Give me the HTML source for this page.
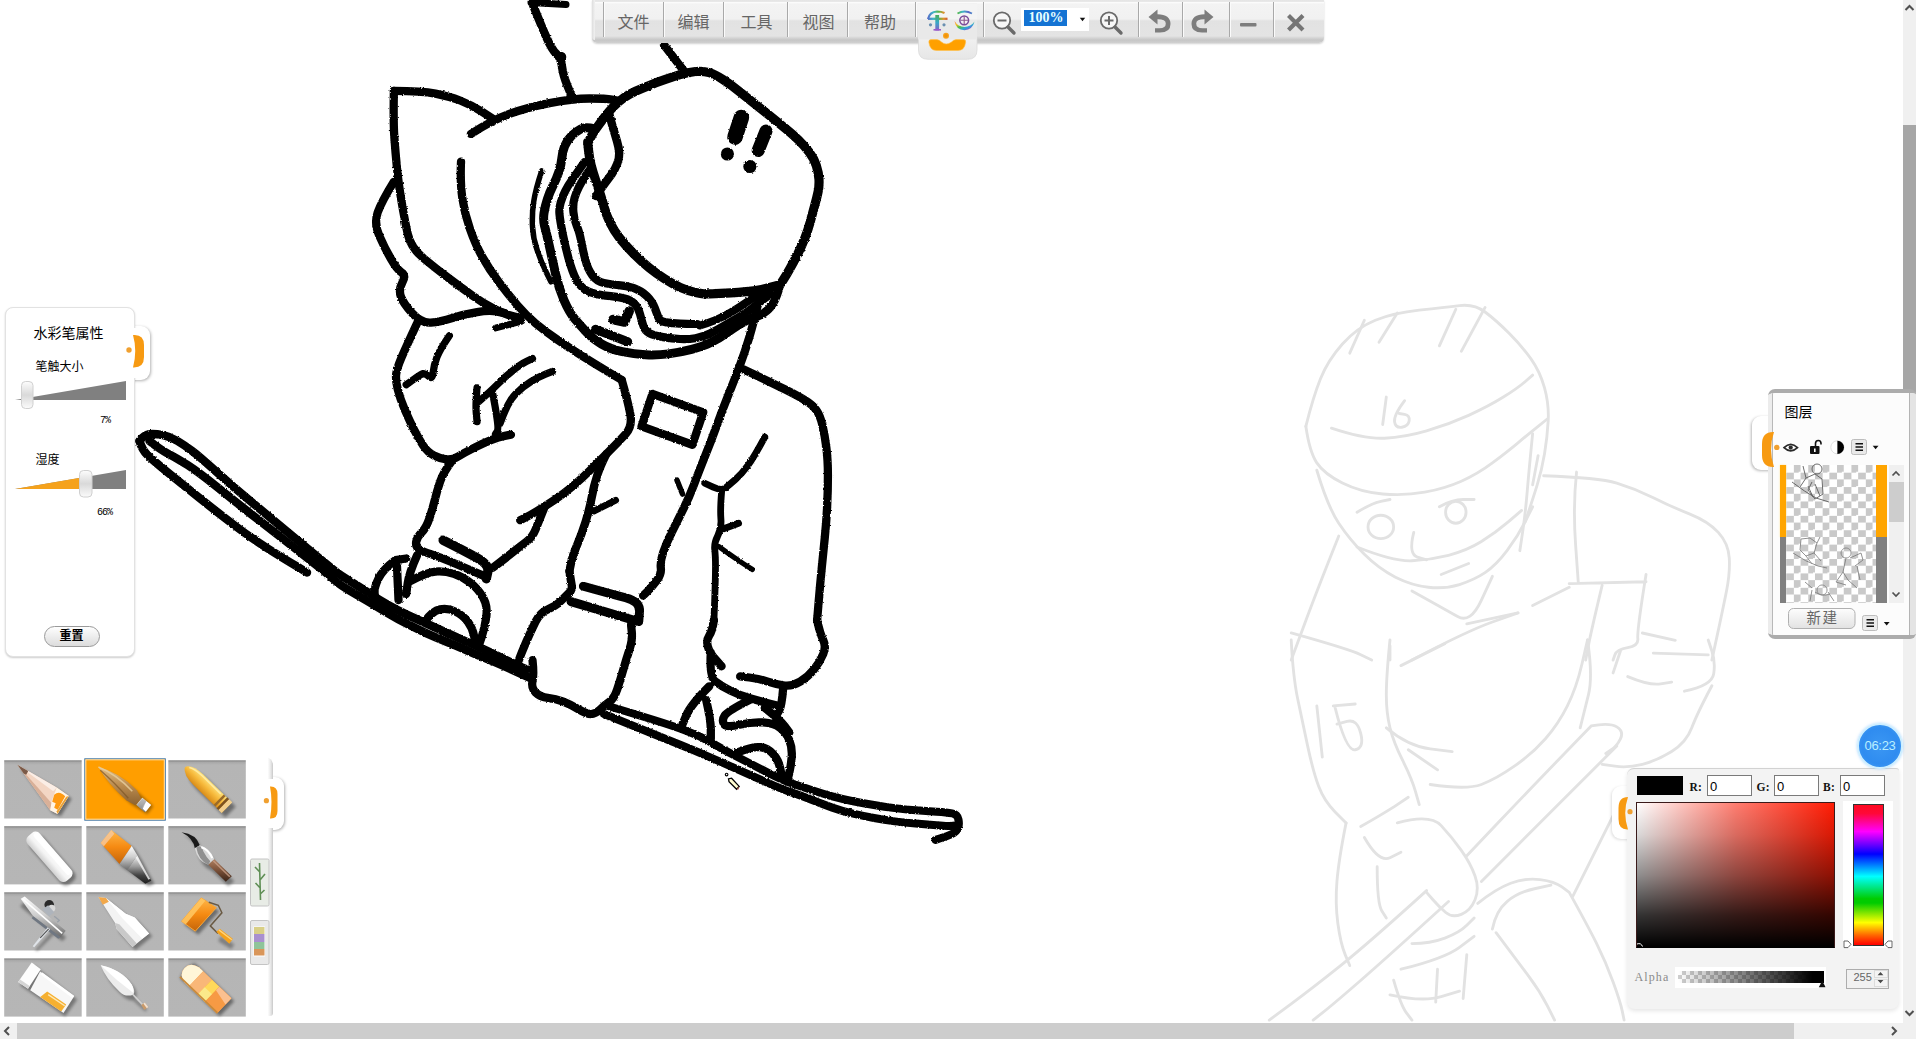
<!DOCTYPE html>
<html lang="zh"><head><meta charset="utf-8"><title>画板</title>
<style>
*{box-sizing:border-box;margin:0;padding:0}
html,body{width:1916px;height:1039px;overflow:hidden;background:#fff;font-family:"Liberation Sans","Noto Sans CJK SC",sans-serif}
.abs{position:absolute}
#canvas{position:absolute;left:0;top:0;width:1916px;height:1039px}
/* scrollbars */
#vs{left:1903px;top:0;width:13px;height:1023px;background:#f0f0f0}
#vs .th{position:absolute;left:0;top:125px;width:13px;height:300px;background:#a6a6a6}
#hs{left:0;top:1023px;width:1916px;height:16px;background:#f0f0f0}
#hs .th{position:absolute;left:17px;top:0;width:1777px;height:16px;background:#cdcdcd}
/* toolbar */
#tb{left:592px;top:0;width:732px;height:43px;border-radius:0 0 5px 5px;background:linear-gradient(#e4e4e4 0,#e9e9e9 2px,#fbfbfb 2.5px,#f3f3f3 4px,#f1f1f1 19px,#e2e2e2 21px,#e4e4e4 36px,#d4d4d4 38px,#c6c6c6 40px,#d0d0d0 43px);box-shadow:0 1px 2px rgba(0,0,0,.18);border-left:2px solid #e9e9e9;border-right:2px solid #dcdcdc}
.sep{position:absolute;top:2px;width:2px;height:35px;border-left:1px solid #a9a9a9;border-right:1px solid #fbfbfb}
.mi{position:absolute;top:13px;font-size:16px;line-height:20px;color:#666;white-space:nowrap}
/* panels */
.pn{background:#fff;border:1px solid #d9d9d9;border-radius:8px;box-shadow:0 1px 3px rgba(0,0,0,.25)}
.t12{font-size:12px;line-height:14px;color:#000;white-space:nowrap}
</style></head><body>
<svg id="canvas" viewBox="0 0 1916 1039">
<g id="ghost" fill="none" stroke="#e2e2e2" stroke-width="7.8" stroke-linecap="round" stroke-linejoin="round">
<g transform="translate(1240,280) scale(0.3658)">
<path d="M180.0,400.0 Q200.0,320.0 220.0,270.0 Q240.0,220.0 280.0,175.0 Q320.0,130.0 370.0,110.0 Q420.0,90.0 490.0,82.5 Q560.0,75.0 600.0,70.0 Q640.0,65.0 670.0,87.5 Q700.0,110.0 735.0,145.0 Q770.0,180.0 795.0,215.0 Q820.0,250.0 832.5,295.0 Q845.0,340.0 842.5,385.0 Q840.0,430.0 832.5,475.0 Q825.0,520.0 812.5,560.0 Q800.0,600.0 790.0,630.0 L780.0,660.0"/>
<path d="M180.0,400.0 Q190.0,470.0 210.0,500.0 Q230.0,530.0 280.0,555.0 Q330.0,580.0 390.0,585.0 Q450.0,590.0 505.0,580.0 Q560.0,570.0 605.0,550.0 Q650.0,530.0 690.0,500.0 Q730.0,470.0 760.0,445.0 Q790.0,420.0 815.0,400.0 L840.0,380.0"/>
<path d="M250.0,405.0 Q340.0,435.0 395.0,432.5 Q450.0,430.0 510.0,412.5 Q570.0,395.0 625.0,370.0 Q680.0,345.0 720.0,320.0 Q760.0,295.0 780.0,277.5 L800.0,260.0"/>
<path d="M430.0,90.0 L380.0,170.0 M590.0,80.0 L545.0,180.0 M670.0,75.0 L605.0,195.0 M340.0,110.0 L300.0,200.0"/>
<path d="M400.0,320.0 L390.0,395.0 M450.0,330.0 Q420.0,370.0 422.5,387.5 Q425.0,405.0 442.5,402.5 Q460.0,400.0 462.5,385.0 Q465.0,370.0 450.0,367.5 L435.0,365.0"/>
<path d="M210.0,520.0 Q240.0,620.0 270.0,665.0 Q300.0,710.0 340.0,750.0 Q380.0,790.0 425.0,812.5 Q470.0,835.0 515.0,840.0 Q560.0,845.0 600.0,832.5 Q640.0,820.0 670.0,800.0 Q700.0,780.0 730.0,740.0 Q760.0,700.0 780.0,660.0 L800.0,620.0"/>
<ellipse cx="385" cy="675" rx="35" ry="32"/><ellipse cx="590" cy="635" rx="28" ry="30"/>
<path d="M320.0,635.0 Q360.0,610.0 385.0,605.0 L410.0,600.0 M545.0,620.0 Q580.0,600.0 610.0,600.0 L640.0,600.0"/>
<path d="M475.0,690.0 Q460.0,750.0 485.0,757.5 L510.0,765.0 M550.0,805.0 L625.0,775.0"/>
<path d="M320.0,730.0 Q420.0,770.0 470.0,767.5 Q520.0,765.0 570.0,752.5 Q620.0,740.0 660.0,715.0 Q700.0,690.0 735.0,660.0 L770.0,630.0"/>
<path d="M470.0,850.0 Q560.0,900.0 595.0,920.0 Q630.0,940.0 660.0,875.0 L690.0,810.0 M620.0,940.0 L760.0,910.0"/>
<path d="M270.0,700.0 Q210.0,850.0 175.0,944.5 L140.0,1039.0 M140.0,965.0 Q300.0,1010.0 330.0,1024.5 L360.0,1039.0 M410.0,1000.0 L410.0,1039.0 M470.0,1039.0 Q620.0,960.0 690.0,935.0 L760.0,910.0"/>
<path d="M830.0,535.0 Q980.0,540.0 1030.0,555.0 Q1080.0,570.0 1130.0,595.0 Q1180.0,620.0 1230.0,640.0 Q1280.0,660.0 1307.5,690.0 Q1335.0,720.0 1337.5,760.0 Q1340.0,800.0 1330.0,850.0 Q1320.0,900.0 1305.0,969.5 L1290.0,1039.0"/>
<path d="M920.0,525.0 Q910.0,620.0 917.5,725.0 L925.0,830.0 M900.0,830.0 L1110.0,825.0 M800.0,890.0 L900.0,840.0 M990.0,835.0 Q960.0,960.0 952.5,999.5 L945.0,1039.0 M1110.0,805.0 Q1085.0,960.0 1087.5,980.0 Q1090.0,1000.0 1060.0,1005.0 Q1030.0,1010.0 1025.0,1024.5 L1020.0,1039.0 M1100.0,965.0 L1190.0,985.0 M1130.0,1020.0 L1280.0,1025.0"/>
<path d="M800.0,420.0 Q790.0,520.0 785.0,580.0 Q780.0,640.0 772.5,690.0 L765.0,740.0 M815.0,480.0 L800.0,560.0"/>
</g>
<g transform="translate(1240,640) scale(0.3658)">
<path d="M140.0,0.0 Q145.0,100.0 157.5,160.0 Q170.0,220.0 185.0,290.0 Q200.0,360.0 215.0,400.0 Q230.0,440.0 260.0,470.0 L290.0,500.0 M410.0,0.0 Q400.0,100.0 400.0,150.0 Q400.0,200.0 410.0,240.0 Q420.0,280.0 445.0,330.0 Q470.0,380.0 480.0,415.0 L490.0,450.0"/>
<path d="M210.0,180.0 L225.0,320.0 M260.0,185.0 Q290.0,305.0 315.0,300.0 Q340.0,295.0 330.0,255.0 Q320.0,215.0 292.5,222.5 L265.0,230.0 M255.0,180.0 L315.0,175.0"/>
<path d="M290.0,500.0 Q270.0,600.0 265.0,660.0 Q260.0,720.0 267.5,775.0 Q275.0,830.0 287.5,860.0 L300.0,890.0 M330.0,510.0 Q400.0,470.0 430.0,450.0 L460.0,430.0 M340.0,540.0 Q380.0,610.0 410.0,595.0 L440.0,580.0 M375.0,620.0 Q375.0,720.0 387.5,740.0 L400.0,760.0"/>
<path d="M430.0,500.0 Q520.0,475.0 550.0,507.5 Q580.0,540.0 605.0,575.0 Q630.0,610.0 642.5,645.0 Q655.0,680.0 642.5,710.0 Q630.0,740.0 605.0,750.0 Q580.0,760.0 562.5,745.0 Q545.0,730.0 527.5,710.0 L510.0,690.0"/>
<path d="M960.0,235.0 Q1010.0,225.0 1030.0,237.5 Q1050.0,250.0 1040.0,270.0 Q1030.0,290.0 1015.0,300.0 L1000.0,310.0 M960.0,235.0 Q800.0,400.0 710.0,495.0 L620.0,590.0 M1030.0,290.0 Q870.0,450.0 765.0,555.0 L660.0,660.0 M510.0,685.0 Q350.0,830.0 275.0,890.0 Q200.0,950.0 140.0,994.5 L80.0,1039.0 M570.0,715.0 Q400.0,870.0 325.0,935.0 Q250.0,1000.0 225.0,1019.5 L200.0,1039.0"/>
<path d="M440.0,70.0 L560.0,10.0 M400.0,240.0 Q460.0,290.0 520.0,297.5 L580.0,305.0 M460.0,300.0 L540.0,355.0 M520.0,395.0 Q620.0,410.0 660.0,395.0 Q700.0,380.0 750.0,345.0 Q800.0,310.0 835.0,270.0 Q870.0,230.0 895.0,180.0 Q920.0,130.0 935.0,65.0 L950.0,0.0"/>
<path d="M950.0,0.0 Q965.0,100.0 952.5,150.0 Q940.0,200.0 935.0,220.0 L930.0,240.0 M1040.0,30.0 L1020.0,90.0 M1060.0,100.0 Q1120.0,125.0 1150.0,120.0 L1180.0,115.0 M1215.0,140.0 Q1290.0,125.0 1295.0,92.5 Q1300.0,60.0 1290.0,30.0 L1280.0,0.0 M1290.0,125.0 Q1250.0,200.0 1235.0,240.0 Q1220.0,280.0 1180.0,305.0 Q1140.0,330.0 1100.0,340.0 Q1060.0,350.0 1025.0,345.0 L990.0,340.0"/>
<path d="M650.0,720.0 Q700.0,680.0 740.0,665.0 Q780.0,650.0 820.0,655.0 Q860.0,660.0 880.0,675.0 L900.0,690.0 M690.0,790.0 Q700.0,740.0 730.0,715.0 Q760.0,690.0 805.0,680.0 L850.0,670.0 M900.0,690.0 Q950.0,780.0 975.0,830.0 Q1000.0,880.0 1020.0,935.0 Q1040.0,990.0 1045.0,1014.5 L1050.0,1039.0 M700.0,800.0 Q760.0,880.0 790.0,920.0 Q820.0,960.0 840.0,999.5 L860.0,1039.0 M910.0,700.0 Q960.0,600.0 990.0,540.0 L1020.0,480.0"/>
<path d="M470.0,830.0 Q520.0,830.0 560.0,815.0 Q600.0,800.0 620.0,780.0 L640.0,760.0 M440.0,900.0 Q560.0,870.0 600.0,840.0 L640.0,810.0 M420.0,930.0 Q440.0,1000.0 455.0,1019.5 L470.0,1039.0 M540.0,900.0 L535.0,990.0 M620.0,860.0 L610.0,980.0 M410.0,970.0 Q500.0,990.0 550.0,975.0 L600.0,960.0"/>
</g>
<!-- cursor -->
<g stroke="none"><circle cx="726.6" cy="774.6" r="1.3" fill="#fff" stroke="#000" stroke-width="1.1"/>
<path d="M728.5,778.8 L731.6,778.2 L739.2,786.4 L736.6,789.2 L729,781.6 Z" fill="#fffbd0" stroke="#000" stroke-width="1.3" stroke-linejoin="miter"/><path d="M736.6,789.2 L739.2,786.4 L738.6,789.6 Z" fill="#b05a50"/></g>
</g>
<defs><filter id="rough" filterUnits="userSpaceOnUse" x="120" y="-10" width="860" height="870"><feTurbulence type="fractalNoise" baseFrequency="0.6" numOctaves="2" seed="4" result="n"/><feDisplacementMap in="SourceGraphic" in2="n" scale="2.4" xChannelSelector="R" yChannelSelector="G" result="d"/><feGaussianBlur in="d" stdDeviation="0.35"/></filter></defs>
<g id="ink" filter="url(#rough)" fill="none" stroke="#000" stroke-width="8.4" stroke-linecap="round" stroke-linejoin="round">
<!-- real-coordinate strokes -->
<path d="M531.0,2.5 L566.0,4.5" stroke-width="7"/>
<path d="M533.0,5.0 Q541.0,25.0 546.5,37.5 Q552.0,50.0 556.5,54.0 Q561.0,58.0 562.0,66.5 Q563.0,75.0 567.5,86.0 L572.0,97.0"/>
<circle cx="561" cy="57" r="3.2" fill="#000" stroke-width="4.2"/>
<path d="M664.0,45.0 L684.0,71.0"/>
<path d="M741.4,117.5 L735.0,137.0" stroke-width="15.5"/>
<circle cx="727.4" cy="154" r="6.6" fill="#000" stroke="none"/>
<path d="M766.0,131.0 L758.2,150.5" stroke-width="13"/>
<circle cx="749.9" cy="166.5" r="6.6" fill="#000" stroke="none"/>
<!-- helmet & straps (real coords) -->
<path d="M587.7,143.2 Q592.3,133.9 596.1,128.6 Q600.0,123.2 604.6,117.0 Q609.3,110.8 613.9,106.2 Q618.5,101.6 623.9,97.8 Q629.3,93.9 635.5,91.2 Q641.6,88.5 649.3,85.4 Q657.0,82.3 664.7,79.7 Q672.4,77.0 680.1,74.7 Q687.8,72.3 695.5,71.5 Q703.2,70.8 709.3,72.7 Q715.4,74.6 723.1,79.7 Q730.8,84.7 738.5,90.8 Q746.2,97.0 753.9,103.2 Q761.6,109.3 769.3,115.4 Q777.0,121.6 784.7,127.8 Q792.4,133.9 798.5,140.1 Q804.7,146.3 809.4,152.4 Q814.0,158.6 816.3,165.5 Q818.6,172.4 819.0,179.4 Q819.3,186.3 818.1,191.7 Q817.0,197.0 814.7,205.4 Q812.4,213.9 810.1,222.4 Q807.8,230.8 804.7,238.5 Q801.6,246.2 797.8,253.9 Q793.9,261.6 790.0,268.6 Q786.2,275.5 783.1,280.1 Q780.0,284.7 780.0,284.7 Q780.0,284.7 774.6,286.2 Q769.3,287.8 761.6,289.4 Q753.9,290.9 746.2,291.6 Q738.5,292.4 730.8,292.8 Q723.1,293.2 715.4,293.6 Q707.7,294.0 705.5,293.9 Q703.2,293.9 695.5,292.4 Q687.8,290.9 680.1,287.4 Q672.4,283.9 664.7,278.9 Q657.0,273.9 649.3,267.8 Q641.6,261.6 633.9,253.9 Q626.2,246.2 620.0,238.5 Q613.9,230.8 610.2,223.1 Q606.5,215.4 604.5,208.2 Q602.5,201.0 600.2,194.0 Q598.0,187.0 595.5,179.8 Q593.0,172.5 591.1,165.2 Q589.3,158.0 588.5,150.0 L587.7,142.0" stroke-width="9.2"/>
<path d="M780.0,284.7 Q777.0,297.0 773.1,303.2 Q769.3,309.4 764.6,312.4 Q760.0,315.5 756.2,317.1 L752.4,318.6" stroke-width="8.4"/>
<path d="M609.3,113.9 Q610.9,121.0 613.0,127.8 Q615.0,134.6 617.0,141.3 Q619.0,148.0 619.2,153.0 Q619.5,158.0 617.2,163.8 Q615.0,169.5 611.8,174.0 Q608.5,178.5 605.0,183.2 Q601.6,187.8 598.8,191.9 L596.0,196.0" stroke-width="8.4"/>
<path d="M589.0,170.5 Q582.0,181.0 579.1,186.7 Q576.2,192.4 574.5,198.2 Q572.7,204.0 573.4,212.0 Q574.0,220.0 576.8,226.0 Q579.5,232.0 581.2,241.4 Q583.0,250.8 585.4,260.1 Q587.7,269.3 592.4,275.5 Q597.0,281.6 603.9,283.1 Q610.8,284.7 618.5,285.1 Q626.2,285.5 633.9,288.2 Q641.6,290.9 647.0,296.2 Q652.4,301.6 654.7,307.8 Q657.0,314.0 658.5,317.8 Q660.0,321.6 666.2,322.4 Q672.4,323.2 680.1,323.6 Q687.8,324.0 692.4,324.0 L697.0,324.0" stroke-width="8.2"/>
<path d="M700.0,325.5 Q707.7,323.2 715.4,320.1 Q723.1,317.0 730.8,312.4 Q738.5,307.8 746.2,302.4 Q753.9,297.0 760.8,293.9 L767.8,290.9" stroke-width="8"/>
<path d="M584.3,162.4 Q576.2,173.9 572.2,179.7 Q568.1,185.5 565.2,191.2 Q562.3,197.0 560.6,202.8 Q558.9,208.6 559.5,214.3 Q560.0,220.0 562.4,232.4 Q564.8,244.8 568.6,258.6 Q572.5,272.5 576.2,279.4 Q580.0,286.2 584.6,289.3 Q589.2,292.4 596.1,293.9 Q603.0,295.5 610.8,296.2 Q618.5,297.0 624.6,298.5 Q630.8,300.0 634.6,303.9 Q638.5,307.8 640.0,313.9 Q641.6,320.0 643.2,325.4 Q644.7,330.9 649.4,333.2 Q654.0,335.5 663.2,337.1 Q672.4,338.6 680.1,339.0 Q687.8,339.4 695.4,338.2 Q703.0,337.0 710.0,333.5 Q717.0,330.0 724.5,325.5 Q732.0,321.0 739.0,317.0 Q746.0,313.0 752.2,308.1 Q758.5,303.2 764.6,298.6 L770.8,294.0" stroke-width="8.2"/>
<path d="M594.7,128.9 Q585.4,126.6 580.8,128.9 Q576.2,131.2 571.6,135.8 Q567.0,140.4 564.6,146.2 Q562.3,152.0 561.8,158.3 Q561.2,164.7 558.9,171.6 Q556.6,178.5 553.1,185.4 Q549.6,192.4 547.3,199.4 Q545.0,206.3 544.0,213.2 Q543.0,220.0 544.6,226.2 Q546.3,232.5 549.4,246.3 Q552.5,260.2 555.6,274.0 Q558.7,287.9 564.0,300.2 Q569.4,312.6 574.7,318.8 Q580.0,325.0 586.1,331.8 Q592.3,338.6 601.5,344.0 Q610.8,349.4 622.3,351.7 Q633.9,354.0 645.5,354.8 Q657.0,355.5 668.5,353.9 Q680.0,352.4 691.6,349.4 Q703.2,346.3 710.9,342.5 Q718.6,338.6 726.3,333.2 Q734.0,327.8 739.5,324.4 Q745.0,321.0 750.0,318.8 L755.0,316.5" stroke-width="9"/>
<path d="M613,319.5 L624.5,322 L629.3,311" stroke-width="9.5"/>
<path d="M595.4,329.3 L627.7,341.7" stroke-width="9"/>
<!-- board lines -->
<path d="M139.5,441.0 Q144.0,434.5 150.0,434.1 Q156.0,433.8 163.0,435.1 Q170.0,436.5 177.5,441.0 Q185.0,445.5 192.0,450.8 Q199.0,456.0 216.5,471.8 Q234.0,487.5 251.5,502.0 Q269.0,516.5 286.0,530.8 Q303.0,545.0 316.5,556.0 Q330.0,567.0 335.0,571.0 Q340.0,575.0 349.6,580.8 Q359.2,586.6 368.9,593.0 Q378.5,599.5 388.1,605.0 Q397.7,610.5 407.4,614.9 Q417.0,619.3 426.6,623.6 Q436.2,628.0 445.9,632.4 Q455.5,636.7 465.1,641.0 Q474.7,645.3 484.4,649.6 Q494.0,654.0 503.6,658.8 Q513.2,663.6 520.0,666.5 L526.7,669.4"/>
<path d="M149.5,441.0 Q160.8,450.0 168.5,453.9 Q176.2,457.7 187.6,465.1 Q199.0,472.5 216.5,486.6 Q234.0,500.8 251.5,514.4 Q269.0,528.0 286.0,541.2 Q303.0,554.5 316.5,565.2 Q330.0,576.0 335.0,580.5 Q340.0,585.0 349.6,590.6 Q359.2,596.2 368.9,602.0 Q378.5,607.8 388.1,613.5 Q397.7,619.3 407.4,624.1 Q417.0,629.0 426.6,633.3 Q436.2,637.6 445.9,641.5 Q455.5,645.3 465.1,649.6 Q474.7,654.0 484.4,657.9 Q494.0,661.7 503.6,666.0 Q513.2,670.4 521.6,674.2 L530.0,678.0"/>
<path d="M139.5,441.0 Q142.0,449.5 147.2,454.8 Q152.5,460.0 167.2,472.0 Q182.0,484.0 199.5,498.0 Q217.0,512.0 234.0,525.0 Q251.0,538.0 268.5,549.0 Q286.0,560.0 296.5,566.2 L307.0,572.5"/>
<path d="M608.0,706.0 Q634.7,714.0 654.0,720.0 Q673.2,726.0 686.6,730.9 Q700.0,735.8 710.8,742.3 Q721.6,748.8 737.0,756.8 Q752.4,764.8 767.8,772.6 Q783.2,780.5 792.1,783.5 Q801.0,786.5 811.5,790.0 Q822.0,793.5 832.3,796.4 Q842.6,799.2 853.0,801.2 Q863.5,803.2 874.0,805.0 Q884.4,806.8 894.8,808.1 Q905.3,809.4 915.6,810.2 Q926.0,811.0 936.5,811.8 Q947.0,812.5 952.2,813.4 Q957.5,814.3 958.5,819.5 Q959.5,824.7 958.0,828.4 Q956.4,832.0 951.7,834.1 Q947.0,836.2 941.2,838.0 L935.5,839.9" stroke-width="8"/>
<path d="M604.0,714.0 Q634.7,726.5 654.0,734.2 Q673.2,742.0 682.0,745.5 Q690.8,749.0 706.2,755.6 Q721.6,762.2 737.0,769.1 Q752.4,776.0 767.8,782.9 Q783.2,789.8 792.1,792.6 Q801.0,795.5 811.5,799.8 Q822.0,804.0 832.3,807.6 Q842.6,811.3 853.0,813.6 Q863.5,816.0 874.0,818.0 Q884.4,820.0 894.8,821.4 Q905.3,822.8 915.6,823.6 Q926.0,824.4 936.5,825.3 Q947.0,826.3 951.0,825.9 L955.0,825.5" stroke-width="8"/>

<!-- G1 origin (360,60) -->
<g transform="translate(360,60) scale(0.308)" stroke-width="26.9">
<path d="M110.0,100.0 Q200.0,100.0 245.0,109.0 Q290.0,118.0 325.0,131.5 Q360.0,145.0 395.0,167.5 L430.0,190.0"/>
<path d="M360.0,240.0 Q430.0,195.0 485.0,175.0 Q540.0,155.0 615.0,140.0 Q690.0,125.0 745.0,125.0 Q800.0,125.0 817.5,128.5 L835.0,132.0"/>
<path d="M110.0,100.0 Q108.0,200.0 111.5,250.0 Q115.0,300.0 120.0,350.0 Q125.0,400.0 135.0,460.0 Q145.0,520.0 155.0,565.0 Q165.0,610.0 207.5,645.0 Q250.0,680.0 290.0,710.0 Q330.0,740.0 365.0,765.0 Q400.0,790.0 435.0,807.5 Q470.0,825.0 495.0,831.5 L520.0,838.0"/>
<path d="M440.0,870.0 L525.0,848.0" stroke-width="22.1"/>
<path d="M110.0,395.0 Q70.0,460.0 57.5,495.0 Q45.0,530.0 62.5,570.0 Q80.0,610.0 100.0,645.0 Q120.0,680.0 135.0,690.0 Q150.0,700.0 137.5,722.5 Q125.0,745.0 132.5,767.5 Q140.0,790.0 170.0,822.5 Q200.0,855.0 230.0,852.5 Q260.0,850.0 300.0,837.5 Q340.0,825.0 380.0,818.5 Q420.0,812.0 445.0,817.0 L470.0,822.0"/>
<path d="M328.0,330.0 Q325.0,400.0 332.5,450.0 Q340.0,500.0 357.5,550.0 Q375.0,600.0 397.5,640.0 Q420.0,680.0 450.0,720.0 Q480.0,760.0 510.0,795.0 Q540.0,830.0 570.0,855.0 Q600.0,880.0 640.0,907.5 Q680.0,935.0 720.0,960.0 Q760.0,985.0 805.0,1012.0 L850.0,1039.0"/>
<path d="M590.0,360.0 Q570.0,420.0 564.0,460.0 Q558.0,500.0 560.0,540.0 Q562.0,580.0 576.0,620.0 Q590.0,660.0 605.0,690.0 L620.0,720.0" stroke-width="17.9"/>
</g>

<!-- G2 origin (560,40) -->
<g transform="translate(560,40) scale(0.308)" stroke-width="26.9">
</g>

<!-- G3 origin (360,300) -->
<g transform="translate(360,300) scale(0.308)" stroke-width="26.9">
<path d="M185.0,76.0 Q150.0,151.0 135.0,186.0 Q120.0,221.0 117.5,240.5 Q115.0,260.0 122.5,290.0 Q130.0,320.0 145.0,355.0 Q160.0,390.0 175.0,420.0 Q190.0,450.0 205.0,472.5 Q220.0,495.0 240.0,505.0 Q260.0,515.0 280.0,517.5 Q300.0,520.0 320.0,507.5 Q340.0,495.0 370.0,480.0 Q400.0,465.0 425.0,455.0 Q450.0,445.0 470.0,441.0 L490.0,437.0"/>
<path d="M300.0,520.0 Q270.0,560.0 260.0,590.0 Q250.0,620.0 242.5,650.0 Q235.0,680.0 225.0,710.0 Q215.0,740.0 200.0,755.0 Q185.0,770.0 182.5,785.0 Q180.0,800.0 190.0,807.5 Q200.0,815.0 230.0,825.0 Q260.0,835.0 295.0,850.0 Q330.0,865.0 365.0,880.0 L400.0,895.0"/>
<path d="M270.0,780.0 Q340.0,815.0 380.0,837.5 Q420.0,860.0 415.0,882.5 L410.0,905.0" stroke-width="30.4"/>
<path d="M290.0,116.0 Q260.0,160.0 250.0,185.0 Q240.0,210.0 237.5,235.0 Q235.0,260.0 222.5,247.5 Q210.0,235.0 197.5,242.5 Q185.0,250.0 167.5,262.5 L150.0,275.0" stroke-width="23.5"/>
<path d="M380.0,285.0 Q375.0,340.0 377.5,367.5 L380.0,395.0 M385.0,330.0 Q420.0,300.0 445.0,275.0 Q470.0,250.0 495.0,230.0 Q520.0,210.0 540.0,200.0 L560.0,190.0 M430.0,300.0 Q440.0,350.0 445.0,385.0 Q450.0,420.0 445.0,427.5 L440.0,435.0 M455.0,400.0 Q480.0,330.0 505.0,305.0 Q530.0,280.0 555.0,265.0 Q580.0,250.0 602.5,241.0 L625.0,232.0" stroke-width="23.5"/>
<path d="M850.0,260.0 Q870.0,330.0 877.5,370.0 Q885.0,410.0 862.5,435.0 Q840.0,460.0 810.0,490.0 Q780.0,520.0 750.0,550.0 Q720.0,580.0 690.0,605.0 Q660.0,630.0 630.0,650.0 Q600.0,670.0 575.0,685.0 Q550.0,700.0 535.0,707.5 L520.0,715.0"/>
<path d="M600.0,670.0 Q580.0,720.0 570.0,745.0 Q560.0,770.0 540.0,785.0 Q520.0,800.0 495.0,820.0 Q470.0,840.0 450.0,855.0 L430.0,870.0"/>
<path d="M800.0,500.0 Q780.0,540.0 770.0,570.0 Q760.0,600.0 752.5,640.0 Q745.0,680.0 732.5,720.0 Q720.0,760.0 705.0,795.0 Q690.0,830.0 685.0,855.0 L680.0,880.0"/>
<path d="M760.0,685.0 L830.0,650.0" stroke-width="22.1"/>
</g>

<!-- G4 origin (600,300) -->
<g transform="translate(600,300) scale(0.308)" stroke-width="26.9">
<path d="M519.0,-13.0 Q500.0,70.0 485.0,120.0 Q470.0,170.0 455.0,210.0 Q440.0,250.0 420.0,300.0 Q400.0,350.0 380.0,405.0 Q360.0,460.0 340.0,510.0 Q320.0,560.0 305.0,600.0 Q290.0,640.0 270.0,680.0 Q250.0,720.0 232.5,755.0 Q215.0,790.0 205.0,820.0 Q195.0,850.0 197.5,870.0 Q200.0,890.0 185.0,910.0 Q170.0,930.0 155.0,945.0 L140.0,960.0"/>
<path d="M465.0,225.0 Q560.0,270.0 600.0,290.0 Q640.0,310.0 665.0,325.0 Q690.0,340.0 702.5,357.5 Q715.0,375.0 722.5,407.5 Q730.0,440.0 735.0,480.0 Q740.0,520.0 740.0,570.0 Q740.0,620.0 737.5,670.0 Q735.0,720.0 730.0,770.0 Q725.0,820.0 720.0,870.0 Q715.0,920.0 710.0,979.5 L705.0,1039.0"/>
<path d="M170,305 L335,365 L300,470 L135,410 Z"/>
<path d="M535.0,445.0 Q500.0,510.0 480.0,537.5 Q460.0,565.0 440.0,582.5 Q420.0,600.0 407.5,610.0 Q395.0,620.0 367.5,607.5 L340.0,595.0 M395.0,620.0 Q390.0,680.0 392.5,710.0 Q395.0,740.0 382.5,765.0 Q370.0,790.0 372.5,810.0 Q375.0,830.0 375.0,865.0 Q375.0,900.0 372.5,969.5 L370.0,1039.0 M395.0,745.0 L450.0,725.0" stroke-width="22.1"/>
<path d="M385.0,800.0 Q440.0,840.0 467.5,857.5 L495.0,875.0" stroke-width="16.6"/>
<path d="M250.0,585.0 L268.0,630.0" stroke-width="17.9"/>
</g>

<!-- G6 origin (340,520) -->
<g transform="translate(340,520) scale(0.308)" stroke-width="26.9">
<path d="M180.0,130.0 Q140.0,160.0 125.0,190.0 Q110.0,220.0 112.5,240.0 L115.0,260.0 M180.0,130.0 L215.0,125.0 M185.0,150.0 L190.0,260.0 M250.0,115.0 Q225.0,170.0 220.0,205.0 L215.0,240.0 M225.0,200.0 Q280.0,170.0 310.0,167.5 Q340.0,165.0 370.0,175.0 Q400.0,185.0 425.0,205.0 Q450.0,225.0 465.0,252.5 Q480.0,280.0 475.0,315.0 Q470.0,350.0 460.0,380.0 L450.0,410.0 M275.0,330.0 Q300.0,295.0 325.0,290.0 Q350.0,285.0 375.0,297.5 Q400.0,310.0 415.0,330.0 Q430.0,350.0 435.0,375.0 L440.0,400.0"/>
<path d="M745.0,166.0 Q750.0,200.0 752.5,212.5 Q755.0,225.0 745.0,235.0 Q735.0,245.0 717.5,262.5 Q700.0,280.0 675.0,290.0 Q650.0,300.0 635.0,330.0 Q620.0,360.0 605.0,395.0 Q590.0,430.0 582.5,450.0 L575.0,470.0"/>
<path d="M625.0,455.0 Q630.0,500.0 625.0,522.5 Q620.0,545.0 635.0,560.0 Q650.0,575.0 675.0,577.5 Q700.0,580.0 725.0,590.0 Q750.0,600.0 775.0,615.0 Q800.0,630.0 815.0,630.0 Q830.0,630.0 845.0,615.0 Q860.0,600.0 875.0,590.0 Q890.0,580.0 900.0,550.0 Q910.0,520.0 920.0,485.0 Q930.0,450.0 940.0,420.0 Q950.0,390.0 947.5,365.0 L945.0,340.0"/>
<path d="M790.0,215.0 Q880.0,240.0 927.5,252.5 Q975.0,265.0 972.5,297.5 L970.0,330.0 M750.0,265.0 Q850.0,295.0 910.0,312.5 L970.0,330.0" stroke-width="29"/>
</g>

<!-- G7 origin (660,560) -->
<g transform="translate(660,560) scale(0.308)" stroke-width="26.9">
<path d="M175.0,195.0 Q170.0,230.0 160.0,245.0 Q150.0,260.0 155.0,280.0 Q160.0,300.0 180.0,322.5 L200.0,345.0 M165.0,300.0 Q160.0,380.0 180.0,395.0 Q200.0,410.0 230.0,425.0 Q260.0,440.0 295.0,450.0 Q330.0,460.0 360.0,467.5 L390.0,475.0"/>
<path d="M510.0,195.0 Q520.0,240.0 530.0,260.0 Q540.0,280.0 530.0,305.0 Q520.0,330.0 500.0,355.0 Q480.0,380.0 455.0,395.0 Q430.0,410.0 405.0,407.5 Q380.0,405.0 350.0,395.0 Q320.0,385.0 290.0,381.5 L260.0,378.0"/>
<path d="M400.0,415.0 Q395.0,475.0 387.5,487.5 L380.0,500.0"/>
<path d="M160.0,410.0 Q100.0,470.0 85.0,505.0 L70.0,540.0 M150.0,455.0 Q165.0,520.0 165.0,550.0 L165.0,580.0 M290.0,455.0 Q220.0,490.0 210.0,505.0 Q200.0,520.0 207.5,532.5 Q215.0,545.0 257.5,535.0 Q300.0,525.0 335.0,527.5 Q370.0,530.0 390.0,545.0 Q410.0,560.0 420.0,585.0 Q430.0,610.0 427.5,640.0 Q425.0,670.0 420.0,690.0 L415.0,710.0 M340.0,480.0 Q390.0,520.0 405.0,540.0 L420.0,560.0 M250.0,625.0 Q300.0,605.0 325.0,607.5 Q350.0,610.0 367.5,630.0 Q385.0,650.0 390.0,675.0 L395.0,700.0"/>
</g>
</g>
</svg>

<!-- scrollbars -->
<div id="vs" class="abs"><div class="th"></div>
<svg class="abs" style="left:0;top:0" width="13" height="16"><path d="M2.5,10 L6.5,6 L10.5,10" fill="none" stroke="#505050" stroke-width="2"/></svg>
<svg class="abs" style="left:0;top:1005px" width="13" height="16"><path d="M2.5,6 L6.5,10 L10.5,6" fill="none" stroke="#505050" stroke-width="2"/></svg>
</div>
<div id="hs" class="abs"><div class="th"></div>
<svg class="abs" style="left:0;top:0" width="16" height="16"><path d="M9,4 L5,8 L9,12" fill="none" stroke="#505050" stroke-width="2"/></svg>
<svg class="abs" style="left:1886px;top:0" width="16" height="16"><path d="M6,4 L10,8 L6,12" fill="none" stroke="#505050" stroke-width="2"/></svg>
</div>

<div id="tb" class="abs" style="border:none">
<div class="abs" style="left:0;top:0;width:3px;height:40px;background:linear-gradient(90deg,#dedede,#f1f1f1);border-radius:0 0 0 5px"></div>
<div class="sep" style="left:11px"></div><div class="sep" style="left:71px"></div><div class="sep" style="left:131px"></div><div class="sep" style="left:195px"></div><div class="sep" style="left:255px"></div><div class="sep" style="left:323px"></div><div class="sep" style="left:391px"></div><div class="sep" style="left:546px"></div><div class="sep" style="left:590px"></div><div class="sep" style="left:637px"></div><div class="sep" style="left:681px"></div>
<span class="mi" style="left:25.5px">文件</span><span class="mi" style="left:85.5px">编辑</span><span class="mi" style="left:148.5px">工具</span><span class="mi" style="left:210.5px">视图</span><span class="mi" style="left:272px">帮助</span>
<!-- zoom box -->
<div class="abs" style="left:429px;top:7.7px;width:68px;height:23px;background:#fff"></div>
<div class="abs" style="left:432px;top:10px;width:43px;height:16px;background:#1473d3;color:#fff;font:bold 14px/16px 'Liberation Serif',serif;text-align:center;color:#e6ffff;padding-left:1px">100%</div>
<svg class="abs" style="left:0;top:0" width="732" height="62" viewBox="592 0 732 62">
 <defs>
  <linearGradient id="rb" x1="0" y1="0" x2="1" y2="1"><stop offset="0" stop-color="#ff6a3d"/><stop offset=".25" stop-color="#f4c020"/><stop offset=".45" stop-color="#4bbf4a"/><stop offset=".65" stop-color="#2aa6d8"/><stop offset=".85" stop-color="#8a4fd0"/><stop offset="1" stop-color="#e0409a"/></linearGradient>
  <linearGradient id="rb2" gradientUnits="userSpaceOnUse" x1="927" y1="0" x2="948" y2="0" spreadMethod="reflect"><stop offset="0" stop-color="#5a62c8"/><stop offset=".3" stop-color="#3fb6c8"/><stop offset=".55" stop-color="#58b848"/><stop offset=".8" stop-color="#e0902a"/><stop offset="1" stop-color="#c8503a"/></linearGradient><linearGradient id="rb3" gradientUnits="userSpaceOnUse" x1="0" y1="14" x2="0" y2="31"><stop offset="0" stop-color="#4cae4a"/><stop offset=".5" stop-color="#38a8c8"/><stop offset="1" stop-color="#8a58c8"/></linearGradient><linearGradient id="tabg" x1="0" y1="0" x2="0" y2="1"><stop offset="0" stop-color="#f1f1f1"/><stop offset="1" stop-color="#e6e6e6"/></linearGradient>
 </defs>
 <!-- smiley tab -->
 <path d="M918.5,38 L918.5,50 Q918.5,59.3 928,59.3 L967.5,59.3 Q977,59.3 977,50 L977,38 Z" fill="url(#tabg)" stroke="#dadada" stroke-width=".8"/>
 <rect x="918" y="3.5" width="59" height="36" fill="#e9e9e9"/>
 <rect x="918" y="3.5" width="59" height="16" fill="#f4f4f4"/>
 <!-- left eye icon -->
 <path d="M928,19 Q929.5,12 937,11.5 Q941.5,11.5 944.5,13" fill="none" stroke="url(#rb2)" stroke-width="2.2"/>
 <path d="M928,18.8 H947.5" stroke="url(#rb2)" stroke-width="2.3"/>
 <path d="M937.2,15 V30.5" stroke="url(#rb3)" stroke-width="3.8"/>
 <path d="M933.5,29.8 H941" stroke="#9a58c8" stroke-width="1.6"/>
 <circle cx="930.5" cy="24.8" r="1.6" fill="#6a8fb0"/><circle cx="944" cy="24.8" r="1.6" fill="#6a8fb0"/>
 <!-- right eye icon -->
 <path d="M957.5,13.5 Q964.5,9.5 972,13.5" fill="none" stroke="url(#rb2)" stroke-width="1.8"/>
 <path d="M954.5,21 Q956,30 964.5,30.2 Q972.5,30 974.5,21.5 Q971,26.8 964.5,27 Q958,26.8 954.5,21 Z" fill="url(#rb)"/>
 <circle cx="964.2" cy="20.3" r="4.4" fill="#f4eef6" stroke="#7a4a9a" stroke-width="1.5"/>
 <path d="M964.2,16.5 V24 M960.5,20.3 H968" stroke="#8a5a8a" stroke-width="1.1"/>
 <circle cx="946" cy="35.7" r="3" fill="#f8a21c"/><circle cx="946" cy="35.7" r="1.8" fill="#f0940c"/>
 <path d="M931,39.6 L937,39.6 Q939.5,39.8 941.5,42 Q946,46 951.5,42 Q953.5,39.8 956,39.6 L963.5,39.6 Q966.2,39.8 965.6,42.5 Q964.5,50.5 958,50.5 L936.5,50.5 Q930,50.5 928.9,42.5 Q928.4,39.8 931,39.6 Z" fill="#ffa000" stroke="#ffc04a" stroke-width=".6"/>
 <!-- zoom out -->
 <g fill="none" stroke="#6a6a6a" stroke-width="1.8"><circle cx="1002" cy="20.5" r="8.2" fill="#f7f7f7"/><path d="M997.5,20.5 H1006.5" stroke-width="2"/><path d="M1008,27 L1014,33" stroke-width="3.4" stroke-linecap="round"/></g>
 <g fill="none" stroke="#6a6a6a" stroke-width="1.8"><circle cx="1109" cy="20.5" r="8.2" fill="#f7f7f7"/><path d="M1104.5,20.5 H1113.5 M1109,16 V25" stroke-width="2"/><path d="M1115,27 L1121,33" stroke-width="3.4" stroke-linecap="round"/></g>
 <path d="M1079.8,17.8 L1085.2,17.8 L1082.5,21.3 Z" fill="#111"/>
 <!-- undo -->
 <g fill="#7d7d7d"><path d="M1148.5,17 L1157.5,9.5 L1157.5,14.2 Q1170.5,14.5 1170.5,24 Q1170.5,32.5 1160,32.5 L1155,32.5 L1155,28.3 L1159.5,28.3 Q1165.8,28.3 1165.8,23.5 Q1165.8,19.3 1157.5,19.3 L1157.5,24.5 Z"/>
 <path d="M1213.5,17 L1204.5,9.5 L1204.5,14.2 Q1191.5,14.5 1191.5,24 Q1191.5,32.5 1202,32.5 L1207,32.5 L1207,28.3 L1202.5,28.3 Q1196.2,28.3 1196.2,23.5 Q1196.2,19.3 1204.5,19.3 L1204.5,24.5 Z"/>
 <rect x="1240" y="23" width="16.5" height="3.6" rx="1"/></g>
 <path d="M1288.5,15.5 L1303,30 M1303,15.5 L1288.5,30" stroke="#757575" stroke-width="4.2" stroke-linecap="butt" fill="none"/>
</svg>
</div>
<div class="abs" style="left:126px;top:326px;width:24px;height:54px;background:#fff;border-radius:0 9px 9px 0;box-shadow:1px 1px 3px rgba(0,0,0,.3)"></div>
<div class="abs pn" style="left:5px;top:307px;width:130px;height:350px;border-color:#e2e2e2;box-shadow:0 1px 2px rgba(0,0,0,.2)"></div>
<div class="abs" style="left:125px;top:328px;width:14px;height:50px;background:#fff"></div>
<svg class="abs" style="left:120px;top:326px" width="32" height="56" viewBox="120 326 32 56">
 <path d="M133,335 Q144,334 144,345 L144,357 Q144,368 133,367.5 Q137.5,351 133,335 Z" fill="#f79a12"/>
 <circle cx="129" cy="350" r="2.7" fill="#f0a030"/>
</svg>
<div class="abs" style="left:33.5px;top:325px;font-size:14px;line-height:17px;color:#000;white-space:nowrap">水彩笔属性</div>
<div class="abs t12" style="left:35.5px;top:360px">笔触大小</div>
<svg class="abs" style="left:10px;top:378px" width="122" height="34" viewBox="10 378 122 34">
 <defs><linearGradient id="thg" x1="0" y1="0" x2="0" y2="1"><stop offset="0" stop-color="#fdfdfd"/><stop offset=".5" stop-color="#d9d9d9"/><stop offset="1" stop-color="#fbfbfb"/></linearGradient></defs>
 <path d="M15,400 L126,381 L126,400 Z" fill="#808080"/>
 <rect x="21.5" y="381.5" width="11.5" height="27" rx="4" fill="url(#thg)" stroke="#d0d0d0"/>
</svg>
<div class="abs" style="left:100px;top:414.5px;font-size:10px;line-height:12px;color:#000;font-family:'Liberation Mono',monospace;letter-spacing:-1px">7%</div>
<div class="abs t12" style="left:35.5px;top:453px">湿度</div>
<svg class="abs" style="left:10px;top:466px" width="122" height="34" viewBox="10 466 122 34">
 <path d="M15,489 L126,470 L126,489 Z" fill="#808080"/>
 <path d="M15,489 L86,476.8 L86,489 Z" fill="#f5a21c"/>
 <rect x="79.5" y="470.5" width="12.5" height="26.5" rx="4" fill="url(#thg)" stroke="#d0d0d0"/>
</svg>
<div class="abs" style="left:97px;top:506.5px;font-size:10px;line-height:12px;color:#000;font-family:'Liberation Mono',monospace;letter-spacing:-1px">66%</div>
<div class="abs" style="left:43.5px;top:626px;width:56px;height:21px;border:1px solid #9a9a9a;border-radius:11px;background:linear-gradient(#fefefe,#dcdcdc);font-size:12px;line-height:19px;text-align:center;color:#000;font-weight:bold">重置</div>
<div class="abs" style="left:263px;top:777px;width:21px;height:53px;background:#fff;border-radius:0 9px 9px 0;box-shadow:1px 1px 3px rgba(0,0,0,.3)"></div>
<div class="abs" style="left:249px;top:757px;width:23.5px;height:259px;background:linear-gradient(90deg,#fff 0,#fff 78%,#e4e4e4 92%,#c8c8c8 100%);border-radius:0 8px 3px 0"></div>
<div class="abs" style="left:262px;top:779px;width:14px;height:49px;background:#fff"></div>
<svg class="abs" style="left:0;top:752px" width="290" height="271" viewBox="0 752 290 271">
<defs>
 <filter id="sh" x="-30%" y="-30%" width="160%" height="160%"><feGaussianBlur stdDeviation="1.6"/></filter>
 <linearGradient id="cellg" x1="0" y1="0" x2="0" y2="1"><stop offset="0" stop-color="#7e7e7e"/><stop offset=".035" stop-color="#a9a9a9"/><stop offset=".08" stop-color="#b5b5b5"/><stop offset="1" stop-color="#b6b6b6"/></linearGradient>
 <linearGradient id="wood" x1="0" y1="0" x2="1" y2="0"><stop offset="0" stop-color="#c9a58a"/><stop offset=".35" stop-color="#f6dccb"/><stop offset=".7" stop-color="#efc9b0"/><stop offset="1" stop-color="#fff3e8"/></linearGradient>
 <linearGradient id="brs" x1="0" y1="0" x2="0" y2="1"><stop offset="0" stop-color="#e0bd86"/><stop offset=".5" stop-color="#b98a4e"/><stop offset="1" stop-color="#8c6230"/></linearGradient>
 <linearGradient id="silv" x1="0" y1="0" x2="0" y2="1"><stop offset="0" stop-color="#fff"/><stop offset=".45" stop-color="#cfcfcf"/><stop offset="1" stop-color="#6a6a6a"/></linearGradient>
 <linearGradient id="cray" x1="0" y1="0" x2="0" y2="1"><stop offset="0" stop-color="#ffe27a"/><stop offset=".5" stop-color="#f6b83a"/><stop offset="1" stop-color="#d98c18"/></linearGradient>
 <linearGradient id="chk" x1="0" y1="0" x2="0" y2="1"><stop offset="0" stop-color="#fff"/><stop offset=".6" stop-color="#f4f4f4"/><stop offset="1" stop-color="#d0d0d0"/></linearGradient>
 <linearGradient id="org" x1="0" y1="0" x2="0" y2="1"><stop offset="0" stop-color="#ffb84a"/><stop offset=".5" stop-color="#f58a12"/><stop offset="1" stop-color="#c4640a"/></linearGradient>
 <linearGradient id="brn" x1="0" y1="0" x2="0" y2="1"><stop offset="0" stop-color="#b08060"/><stop offset=".5" stop-color="#7a5038"/><stop offset="1" stop-color="#3a2418"/></linearGradient>
 <linearGradient id="met" x1="0" y1="0" x2="0" y2="1"><stop offset="0" stop-color="#f2f2f2"/><stop offset=".4" stop-color="#9a9a9a"/><stop offset=".7" stop-color="#444"/><stop offset="1" stop-color="#1c1c1c"/></linearGradient>
</defs>
<!-- cells -->
<g fill="url(#cellg)">
 <rect x="4.2" y="760.3" width="77.5" height="58.2"/><rect x="168.3" y="760.3" width="77.5" height="58.2"/>
 <rect x="4.2" y="826.2" width="77.5" height="58.2"/><rect x="86.3" y="826.2" width="77.5" height="58.2"/><rect x="168.3" y="826.2" width="77.5" height="58.2"/>
 <rect x="4.2" y="892.3" width="77.5" height="58.2"/><rect x="86.3" y="892.3" width="77.5" height="58.2"/><rect x="168.3" y="892.3" width="77.5" height="58.2"/>
 <rect x="4.2" y="958.4" width="77.5" height="58.2"/><rect x="86.3" y="958.4" width="77.5" height="58.2"/><rect x="168.3" y="958.4" width="77.5" height="58.2"/>
</g>
<rect x="84.8" y="758.8" width="80.5" height="61.4" fill="#ff9e00" stroke="#3c7ab4" stroke-width="1"/>
<rect x="85.8" y="759.8" width="78.5" height="59.4" fill="none" stroke="#ffe2b0" stroke-width="1"/>

<!-- 1 pencil -->
<g transform="translate(4.2,760.3)">
 <path d="M16,7.5 L55.5,30 L67.5,38.5 L56.5,56 L48.5,53 Z" fill="#000" opacity=".4" filter="url(#sh)"/>
 <path d="M13.2,4.5 L52.5,27.2 L64.6,35.6 L53.3,53.7 L46,50 Z" fill="#f3d6c4"/>
 <path d="M13.2,4.5 L52.5,27.2 L49,31 Z" fill="#fbeee6"/>
 <path d="M13.2,4.5 L46,50 L47.5,43 Z" fill="#d9b098"/>
 <path d="M13.2,4.5 L24,10.8 L22,14.5 L19.5,13.2 Z" fill="#7a5a48"/>
 <path d="M52.5,27.2 L64.6,35.6 L53.3,53.7 L46,50 L47.5,41 Z" fill="#fff4e6"/>
 <path d="M50,34.5 Q55,29.5 61,36 L53.5,49.5 L50,47.5 L51.5,43 L48,41.5 Z" fill="#ff9a12"/>
 <path d="M53.3,53.7 L64.6,35.6 L62,36.5 L52.5,51 Z" fill="#e8a23a"/>
</g>
<!-- 2 watercolor brush -->
<g transform="translate(86.3,760.3)">
 <path d="M15,10 Q36,16 53,33 L67,46 L61,54 L45,44 Q26,28 15,10 Z" fill="#000" opacity=".35" filter="url(#sh)"/>
 <path d="M12.1,6.8 Q33,12 50.5,30 L55,38.5 L49,45 L40,40 Q22,24 12.1,6.8 Z" fill="url(#brs)"/>
 <path d="M12.1,6.8 Q30,14 46,31" stroke="#e9cfa0" stroke-width="1.6" fill="none" opacity=".8"/>
 <path d="M14,10 Q28,22 42,38" stroke="#7d5526" stroke-width="1.4" fill="none" opacity=".7"/>
 <path d="M50,44.5 L56,37.5 L64.5,44.5 L58.5,52 Z" fill="url(#silv)"/>
 <path d="M56,38 L60.5,41.5 L54.5,48.5 L50.5,45 Z" fill="#8b8b8b" opacity=".55"/>
 <path d="M60,41 L64.8,44.6 L59.5,51.5 L56.5,48.5 Z" fill="#fff"/>
</g>
<!-- 3 crayon -->
<g transform="translate(168.3,760.3)">
 <g transform="translate(20,10.5) rotate(44.3)"><path d="M0,0 Q6,-7.5 20,-7.5 L59,-7.5 L59,7.5 L20,7.5 Q6,7.5 0,0 Z" fill="#000" opacity=".4" filter="url(#sh)"/></g>
 <g transform="translate(17.1,6.8) rotate(44.3)">
  <path d="M0,-1 Q4,-7 18,-7.2 L58,-7.2 L58,7.2 L18,7.2 Q4,7 0,1 Z" fill="url(#cray)"/>
  <rect x="46.5" y="-7.2" width="2.6" height="14.4" fill="#9a6a28"/><rect x="51" y="-7.6" width="2.8" height="15.2" fill="#7d5220"/><rect x="53.8" y="-7.6" width="4.2" height="15.2" fill="#f2cf8e"/>
  <path d="M3,-2.5 Q8,-5.5 18,-5.5 L44,-5.5" stroke="#fff0b0" stroke-width="1.5" fill="none" opacity=".8"/>
 </g>
</g>
<!-- 4 chalk -->
<g transform="translate(4.2,826.2)">
 <g transform="translate(33,16) rotate(48.9)"><rect x="-5" y="-8" width="58" height="17" rx="6" fill="#000" opacity=".38" filter="url(#sh)"/></g>
 <g transform="translate(29.8,12.9) rotate(48.9)"><rect x="-6" y="-8" width="59" height="16" rx="5.5" fill="url(#chk)"/><rect x="-4" y="-6.5" width="54" height="5" rx="2.5" fill="#fff"/></g>
</g>
<!-- 5 flat brush -->
<g transform="translate(86.3,826.2)">
 <path d="M28,7 L17.5,20 L36,41 L48,49 L62,60 L68,57.5 L56,35 L48.5,23 Z" fill="#000" opacity=".4" filter="url(#sh)"/>
 <path d="M25,3.9 L14.4,16.7 L33.3,37.9 L45.4,19.7 Z" fill="url(#org)"/>
 <path d="M25,3.9 L14.4,16.7 L17.5,20 L28,7.5 Z" fill="#f6c9a0" opacity=".8"/>
 <path d="M45.4,19.7 L33.3,37.9 L41,44 L51,29 Z" fill="url(#silv)"/>
 <path d="M51,29 L41,44 L59,57.6 L65,54.6 Z" fill="url(#met)"/>
 <path d="M50,30.5 L63,53" stroke="#f4f4f4" stroke-width="2" opacity=".8"/>
</g>
<!-- 6 chinese brush -->
<g transform="translate(168.3,826.2)">
 <path d="M16,9 Q31,12 33,24 Q44,28 48,38 L66,55 L60,60 L44,45 Q32,40 30,27 Q27,15 16,9 Z" fill="#000" opacity=".35" filter="url(#sh)"/>
 <path d="M13.3,6 Q28,8 31.5,19 L26.5,22 Q25,12 13.3,6 Z" fill="#1a1a1a"/>
 <path d="M31.5,19 Q42,22 46,33 L40,38.5 Q29,35 26.5,22 Z" fill="#d9d9d9"/>
 <path d="M28,21 Q33,18 35,25 Q38,31 42,35 L40,38.5 Q30,34 28,21 Z" fill="#777" opacity=".75"/>
 <path d="M33,21 Q40,23 44,32" stroke="#fff" stroke-width="2" fill="none"/>
 <path d="M46,33 L63.5,50 L57.5,55.5 L40,38.5 Z" fill="url(#brn)"/>
 <path d="M45,34.5 L61.5,50.5" stroke="#c9a088" stroke-width="1.6" opacity=".8"/>
</g>
<!-- 7 airbrush -->
<g transform="translate(4.2,892.3)">
 <path d="M20,10 L62,45 L58,49 L16,14 Z M47,40 L31,58 L33,59 L50,42 Z" fill="#000" opacity=".35" filter="url(#sh)"/>
 <path d="M16.5,6.5 L20.5,4.2 L61.5,38.5 L56.5,45 L29,24 Z" fill="url(#silv)"/>
 <path d="M18.5,6.5 L58,41" stroke="#fff" stroke-width="1.6"/>
 <path d="M29,24 L56.5,45 L54,46.5 L27.5,26 Z" fill="#6f7782"/>
 <circle cx="45" cy="12.5" r="4.8" fill="#2a2a2a"/><circle cx="47.5" cy="16" r="3.6" fill="#d8d8d8"/><path d="M38,17 L44,13 L50,20 L45,24 Z" fill="#aeb4bc"/>
 <path d="M46,37 L30,55 L28.5,54 L43.5,35 Z" fill="#dfe3e8"/><path d="M44.5,36.5 L36,45.5" stroke="#555" stroke-width="1.2"/>
 <path d="M50,24 L55,28 L53,30" stroke="#9aa0a8" stroke-width="1.4" fill="none"/>
</g>
<!-- 8 white marker -->
<g transform="translate(86.3,892.3)">
 <path d="M15,8 L23,9 L42,24.5 L51,28 L66,44 L49,58 L33,40 L32,34 Z" fill="#000" opacity=".35" filter="url(#sh)"/>
 <path d="M12.1,4.8 L19.7,5.6 L39.4,21.5 L48.4,25.3 L62.8,41.2 L46.2,54.8 L30.3,36.7 L28.8,30.6 Z" fill="#f3f3f3"/>
 <path d="M19.7,5.6 L39.4,21.5 L48.4,25.3 L62.8,41.2 L56,46.5 L36,26 Z" fill="#fff"/>
 <path d="M28.8,30.6 L30.3,36.7 L46.2,54.8 L50.5,51.3 L33,32 Z" fill="#c9c9c9"/>
 <path d="M12.1,4.8 L19.7,5.6 L22.5,9.5 L16.5,12.5 Z" fill="#f2a84a"/>
</g>
<!-- 9 roller -->
<g transform="translate(168.3,892.3)">
 <path d="M36,9 L16,32.5 L30,42.5 L51,19 Z" fill="#000" opacity=".4" filter="url(#sh)"/>
 <path d="M52,44 L66,52 L63,57 L50,49 Z" fill="#000" opacity=".3" filter="url(#sh)"/>
 <path d="M33,5.6 L13.3,29 L27,38.9 L48.1,15.4 Z" fill="url(#org)" stroke="#f7a83a" stroke-width="1" stroke-linejoin="round"/>
 <path d="M33,5.6 L13.3,29 L17.5,32 L37,8.5 Z" fill="#ffc560" opacity=".9"/>
 <path d="M40.5,10 L50,13 L53.6,20.5 L42,33.6 L49.6,41.2" fill="none" stroke="#6a5a44" stroke-width="1.5"/>
 <path d="M48,39.5 L51.5,36.5 L64.5,46.5 L61,51.5 Z" fill="#f5a21c"/><path d="M50.5,37.6 L63.5,47.5" stroke="#ffd27a" stroke-width="1.4"/>
</g>
<!-- 10 tube -->
<g transform="translate(4.2,958.4)">
 <path d="M30,7 L16,27 L28,35 L61,58 L73,41 L40,15 Z" fill="#000" opacity=".35" filter="url(#sh)"/>
 <path d="M35.9,13 L70,37.8 L59.3,54.5 L26,31.8 Z" fill="#f7f7f7"/>
 <path d="M43,33 L62,46 L57,53 L36,38.5 Z" fill="#f6b030"/><path d="M44,36.2 L60.5,47.4" stroke="#fde9b8" stroke-width="1.3"/>
 <path d="M37,15 L69,38.5" stroke="#fff" stroke-width="3"/>
 <path d="M27.5,4 L13.9,23.6 L23.8,30.4 L36.6,10.8 Z" fill="#fdfdfd"/>
 <path d="M13.9,23.6 L23.8,30.4 L25.5,27.5 L15.8,21 Z" fill="#d5d5d5"/>
</g>
<!-- 11 palette knife -->
<g transform="translate(86.3,958.4)">
 <path d="M17,10 Q37,14 48,29 Q52,36 49,40 L61,51 L59,53 L47,42 Q40,42 35,36 Q22,24 17,10 Z" fill="#000" opacity=".33" filter="url(#sh)"/>
 <path d="M14.4,6.8 Q35,11 45.4,26 Q49.5,33 46.9,36.3 Q39,39 33.3,33.3 Q20,21 14.4,6.8 Z" fill="#ececec"/>
 <path d="M14.4,6.8 Q35,11 45.4,26 Q48,31 46.5,34 Q30,22 14.4,6.8 Z" fill="#fff"/>
 <path d="M46.5,36 L57,47" stroke="#d0d0d0" stroke-width="1.6"/>
 <path d="M55,46.5 L58.5,44 L62,48.5 L58,51.5 Z" fill="#c99a6a"/><path d="M58.5,44 L62,48.5 L60.5,49.8 L57,45.2 Z" fill="#f0e0d0"/>
</g>
<!-- 12 pastel -->
<g transform="translate(168.3,958.4)">
 <g transform="translate(25.5,18.5) rotate(43.8)"><path d="M-9,-10.5 L46,-10.5 L46,10.5 L-9,10.5 Q-14,0 -9,-10.5 Z" fill="#000" opacity=".42" filter="url(#sh)"/></g>
 <g transform="translate(22.3,15.3) rotate(43.8) scale(.93,.95)">
  <path d="M2,-11 L50,-11 L50,11 L2,11 Q-9,9 -9,0 Q-9,-9 2,-11 Z" fill="#f7a24a"/>
  <path d="M2,-11 L8,-11 L8,11 L2,11 Q-9,9 -9,0 Q-9,-9 2,-11 Z" fill="#fff6d8"/>
  <rect x="8" y="-11" width="13" height="22" fill="#f9b778"/><rect x="21" y="-11" width="11" height="22" fill="#ffd95a"/><rect x="21" y="0" width="11" height="11" fill="#fbe98a"/><rect x="32" y="-11" width="18" height="22" fill="#f79a44"/><path d="M32,-11 L50,-11 L50,-2 L32,-6 Z" fill="#fbc090"/>
  <rect x="-6" y="9.3" width="56" height="1.7" fill="#c98a3a"/>
 </g>
</g>
<!-- tab -->
<path d="M270,786.5 Q277.5,786 277.5,794 L277.5,811 Q277.5,819 270,818.5 Q273,802 270,786.5 Z" fill="#f79a12"/><circle cx="266.4" cy="800.7" r="2.6" fill="#f0a030"/>
<!-- small icons -->
<rect x="250.5" y="859" width="18.5" height="47" rx="1.5" fill="#e8ece6" stroke="#c4c4c4"/>
<path d="M259.5,863 L260.5,900 M259.8,872 L255,867 M260,880 L265,874 M260.2,888 L255.5,883 M260.3,894 L264.5,890" stroke="#5f8f55" stroke-width="1.6" fill="none"/>
<rect x="250.5" y="920.5" width="18.5" height="44" rx="1.5" fill="#e9e9e9" stroke="#c4c4c4"/>
<rect x="253.5" y="926.5" width="11.5" height="30" fill="#fff"/>
<rect x="254" y="927" width="10.5" height="7" fill="#d9cf86"/><rect x="254" y="934" width="10.5" height="8" fill="#a990cf"/><rect x="254" y="942" width="10.5" height="7" fill="#8fc49a"/><rect x="254" y="949" width="10.5" height="6.5" fill="#d9965a"/>
</svg>
<div class="abs" style="left:1751.5px;top:416px;width:22px;height:54px;background:#fff;border-radius:9px 0 0 9px;box-shadow:-1px 1px 3px rgba(0,0,0,.28)"></div>
<div class="abs" style="left:1767.5px;top:389px;width:148.5px;height:249.5px;background:#fcfcfc;border-top:4.5px solid #acacac;border-bottom:4.5px solid #acacac;border-radius:7px 6px 6px 7px;overflow:hidden">
 <div class="abs" style="left:0;top:0;width:5px;height:100%;background:#ececec;border-right:1px solid #b8b8b8"></div>
 <div class="abs" style="right:0;top:0;width:7px;height:100%;background:#e4e4e4;border-left:1px solid #b4b4b4"></div>
</div>
<div class="abs" style="left:1784.5px;top:403px;font-size:14px;line-height:18px;color:#000">图层</div>
<!-- list -->
<div class="abs" style="left:1779.8px;top:464.8px;width:107.2px;height:138px;background-color:#fff;background-image:conic-gradient(#c9c9c9 25%,#fff 0 50%,#c9c9c9 0 75%,#fff 0);background-size:14.4px 14.4px;background-position:6.2px 0"></div>
<div class="abs" style="left:1779.8px;top:464.8px;width:6.2px;height:72.2px;background:#ffa500;box-shadow:0 0 2px #ffe08a"></div>
<div class="abs" style="left:1876.3px;top:464.8px;width:10.7px;height:72.2px;background:#ffa500"></div>
<div class="abs" style="left:1779.8px;top:537px;width:6.2px;height:65.8px;background:#808080"></div>
<div class="abs" style="left:1876.3px;top:537px;width:10.7px;height:65.8px;background:#808080"></div>
<div class="abs" style="left:1888.5px;top:464.8px;width:15px;height:138px;background:#f0f0f0"></div>
<div class="abs" style="left:1888.5px;top:481.7px;width:15px;height:40px;background:#cdcdcd"></div>
<svg class="abs" style="left:1745px;top:385px" width="171" height="258" viewBox="1745 385 171 258">
 <!-- tab -->
 <path d="M1774,432 Q1762,431.5 1762,444 L1762,455 Q1762,467.5 1774,467 Q1768,449.5 1774,432 Z" fill="#f79a12"/>
 <circle cx="1776.8" cy="447.4" r="2.7" fill="#f0a030"/>
 <!-- icons -->
 <g fill="none" stroke="#2a2a2a"><path d="M1784,447.6 Q1790.7,441 1797.5,447.6 Q1790.7,454 1784,447.6 Z" stroke-width="1.7"/><circle cx="1790.7" cy="447.6" r="2.1" fill="#2a2a2a" stroke="none"/></g>
 <rect x="1810" y="446" width="9.5" height="8" rx="1" fill="#111"/><path d="M1815.5,446 V443.5 Q1815.5,440.5 1818.3,440.5 Q1821,440.5 1821,443.5 V444.5" fill="none" stroke="#111" stroke-width="1.6"/><rect x="1814" y="448.5" width="1.6" height="3.5" fill="#fff"/>
 <circle cx="1837.4" cy="447.3" r="6.6" fill="#fff" stroke="#d8d8d8" stroke-width=".8"/><path d="M1837.4,440.7 A6.6,6.6 0 0 1 1837.4,453.9 Z" fill="#000"/>
 <rect x="1851.5" y="439.5" width="15" height="15" rx="2" fill="#e9e9e9" stroke="#bdbdbd"/><path d="M1855.5,443.7 H1863 M1855.5,447 H1863 M1855.5,450.3 H1863" stroke="#111" stroke-width="1.4"/>
 <path d="M1872.7,445.8 L1878.5,445.8 L1875.6,449.2 Z" fill="#111"/>
 <!-- list scroll arrows -->
 <path d="M1892.5,475.5 L1896,472 L1899.5,475.5" fill="none" stroke="#505050" stroke-width="1.7"/>
 <path d="M1892.5,592.5 L1896,596 L1899.5,592.5" fill="none" stroke="#505050" stroke-width="1.7"/>
 <!-- thumbnails -->
 <g fill="none" stroke="#555" stroke-width="1" opacity=".85">
  <path d="M1792,482 Q1805,492 1816,498 L1829,502"/><path d="M1803,466 L1806,478 L1800,487 M1806,478 L1815,474 L1822,479 L1823,494 L1815,499 L1808,490 L1812,482"/><circle cx="1817" cy="469" r="5"/><path d="M1808,486 L1813,497 M1815,484 L1820,496"/>
 </g>
 <g fill="none" stroke="#777" stroke-width="1" opacity=".8">
  <path d="M1793,553 Q1806,562 1818,566 L1827,568"/><path d="M1801,539 L1800,550 L1806,556 L1814,553 L1817,543 L1810,538 Z M1806,556 L1812,564 M1814,553 L1821,561 M1817,543 L1820,537"/>
  <path d="M1846,548 a5,5 0 1 0 .1,0 M1846,558 L1843,572 L1848,580 M1850,558 L1861,553 L1863,560 L1855,566 M1843,572 L1836,582 L1846,585 M1848,580 L1857,588 M1857,566 L1860,580"/>
  <path d="M1805,582 L1812,588 M1822,585 a5,5 0 1 0 .1,0 M1812,590 L1810,601 M1828,592 L1834,601 M1815,592 Q1822,597 1830,594"/>
 </g>
 <!-- new button -->
 <defs><linearGradient id="btg" x1="0" y1="0" x2="0" y2="1"><stop offset="0" stop-color="#fdfdfd"/><stop offset="1" stop-color="#e2e2e2"/></linearGradient></defs>
 <rect x="1788.5" y="608.5" width="66.5" height="20" rx="5" fill="url(#btg)" stroke="#b0b0b0"/>
 <rect x="1862.5" y="615.5" width="15" height="15" rx="2" fill="#ececec" stroke="#bdbdbd"/><path d="M1866.5,619.7 H1874 M1866.5,623 H1874 M1866.5,626.3 H1874" stroke="#111" stroke-width="1.4"/>
 <path d="M1883.8,622 L1889.6,622 L1886.7,625.4 Z" fill="#111"/>
</svg>
<div class="abs" style="left:1788.5px;top:609px;width:66.5px;height:20px;text-align:center;font-size:14.5px;line-height:19px;color:#666;letter-spacing:1.5px;padding-left:1.5px">新建</div>
<div class="abs" style="left:1612px;top:786px;width:22px;height:53px;background:#fff;border-radius:9px 0 0 9px;box-shadow:-1px 1px 3px rgba(0,0,0,.13)"></div>
<div class="abs" style="left:1627px;top:767.5px;width:271.5px;height:241px;background:#f3f3f3;border-top:1px solid #d2d2d2;border-radius:7px 3px 8px 8px;box-shadow:0 2px 4px rgba(0,0,0,.10)"></div>
<div class="abs" style="left:1636.5px;top:775.5px;width:46.5px;height:19.5px;background:#000"></div>
<div class="abs cin" style="left:1707px;top:775px"></div><div class="abs cin" style="left:1774px;top:775px"></div><div class="abs cin" style="left:1840px;top:775px"></div>
<style>.cin{width:45px;height:21px;background:#fff;border:1px solid #7a7a7a}.cin:after{content:"";}
.cl{font:bold 11.5px/14px "Liberation Serif",serif;color:#111;letter-spacing:.3px}
.cv{font:13px/15px "Liberation Sans",sans-serif;color:#000}</style>
<div class="abs cl" style="left:1689.5px;top:780px">R:</div><div class="abs cl" style="left:1756.5px;top:780px">G:</div><div class="abs cl" style="left:1823px;top:780px">B:</div>
<div class="abs cv" style="left:1710px;top:779px">0</div><div class="abs cv" style="left:1777px;top:779px">0</div><div class="abs cv" style="left:1843px;top:779px">0</div>
<!-- SV -->
<div class="abs" style="left:1636px;top:801.5px;width:199px;height:146px;background:linear-gradient(to top,#000 0,rgba(0,0,0,.8) 22%,rgba(0,0,0,.44) 50%,rgba(0,0,0,.15) 78%,rgba(0,0,0,0) 100%),linear-gradient(to right,#fff 0,#ff7d70 50%,#ff1c04 100%);border:1px solid #3a1a1a;border-bottom-color:#000"></div>
<div class="abs" style="left:1843px;top:801px;width:50px;height:147px;background:#fff"></div>
<div class="abs" style="left:1853px;top:804px;width:31px;height:141.5px;border:1px solid #333;background:linear-gradient(#ff0a20 0,#ff0838 6%,#f0f 19%,#00f 35%,#0ff 51%,#0c0 67%,#0c0 70%,#ff0 84%,#f60 93%,#f00 100%)"></div>
<div class="abs" style="left:1634.5px;top:969.5px;font:12px/14px 'Liberation Serif',serif;color:#8a8a8a;letter-spacing:1.1px">Alpha</div>
<div class="abs" style="left:1675px;top:967px;width:150.5px;height:21px;background:#fff"></div>
<div class="abs" style="left:1677.5px;top:971px;width:146px;height:12px;background-image:linear-gradient(to right,rgba(0,0,0,0),#000 92%),conic-gradient(#cfcfcf 25%,#fff 0 50%,#cfcfcf 0 75%,#fff 0);background-size:100% 100%,8px 8px"></div>
<div class="abs" style="left:1845.5px;top:969px;width:43.5px;height:19.5px;border:1px solid #adadad;background:#f1f1f1"></div>
<div class="abs" style="left:1853.5px;top:968.5px;font:11px/16px 'Liberation Sans',sans-serif;color:#666">255</div>
<div class="abs" style="left:1874px;top:970px;width:14px;height:8px;background:#f4f4f4;border:1px solid #dcdcdc"></div><div class="abs" style="left:1874px;top:978.5px;width:14px;height:8px;background:#f4f4f4;border:1px solid #dcdcdc"></div>
<!-- timer -->
<div class="abs" style="left:1857px;top:722.5px;width:46px;height:46px;border-radius:50%;background:radial-gradient(circle at 50% 50%,#3b97f3 0,#2f8cf0 60%,#4aa2f5 100%);border:2px solid #cdeeff;box-shadow:0 0 3px rgba(120,190,255,.6);color:#b9efff;font:13px/42px 'Liberation Sans',sans-serif;text-align:center;letter-spacing:-.3px">06:23</div>
<svg class="abs" style="left:1610px;top:780px" width="290" height="240" viewBox="1610 780 290 240">
 <path d="M1628,797 Q1618.5,797 1618.5,808 L1618.5,819 Q1618.5,830 1628,829.5 Q1622.5,813 1628,797 Z" fill="#f79a12"/>
 <circle cx="1630" cy="811.7" r="2.6" fill="#f0a030"/>
 <path d="M1844,941 L1848,941 L1851,944.3 L1848,947.6 L1844,947.6 Z" fill="#fff" stroke="#555" stroke-width=".9"/>
 <path d="M1892,941 L1888,941 L1885,944.3 L1888,947.6 L1892,947.6 Z" fill="#fff" stroke="#555" stroke-width=".9"/>
 <path d="M1637,944 Q1641,942.5 1642.5,946.5" fill="none" stroke="#fff" stroke-width="1"/>
 <path d="M1822.2,980.8 L1825.6,987.2 L1818.8,987.2 Z" fill="#111"/>
 <path d="M1877.6,975.3 L1883.4,975.3 L1880.5,972 Z M1877.6,980 L1883.4,980 L1880.5,983.3 Z" fill="#4a4a4a"/>
</svg>
</body></html>
